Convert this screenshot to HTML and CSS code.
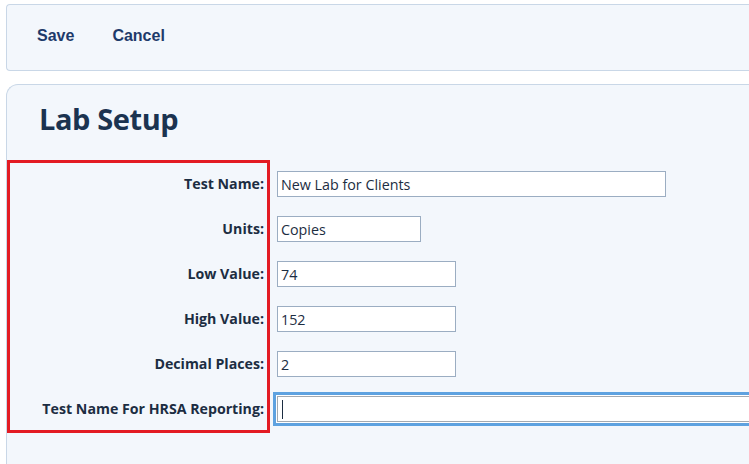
FILE: index.html
```html
<!DOCTYPE html>
<html>
<head>
<meta charset="utf-8">
<link rel="stylesheet" href="styles.css">
</head>
<body>
<div class="toolbar">
  <a class="tool-btn">Save</a>
  <a class="tool-btn">Cancel</a>
</div>
<div class="card">
  <h1 class="title">Lab Setup</h1>
  <div class="form">
    <div class="highlight"></div>
    <label class="lbl">Test Name:</label>
    <div class="field"><input class="inp w-long" type="text" value="New Lab for Clients"></div>
    <label class="lbl">Units:</label>
    <div class="field"><input class="inp w-short" type="text" value="Copies"></div>
    <label class="lbl">Low Value:</label>
    <div class="field"><input class="inp w-mid" type="text" value="74"></div>
    <label class="lbl">High Value:</label>
    <div class="field"><input class="inp w-mid" type="text" value="152"></div>
    <label class="lbl">Decimal Places:</label>
    <div class="field"><input class="inp w-mid" type="text" value="2"></div>
    <label class="lbl">Test Name For HRSA Reporting:</label>
    <div class="field focus-wrap"><input class="inp w-full focused" type="text" value=""><span class="caret"></span></div>
  </div>
</div>
</body>
</html>
```
FILE: styles.css
```css
html, body {
  margin: 0;
  padding: 0;
  background: #ffffff;
  overflow: hidden;
}
body {
  padding: 4px 0 0 6px;
  height: 464px;
  box-sizing: border-box;
}
.toolbar {
  box-sizing: border-box;
  height: 67px;
  width: 743px;
  background: #f3f7fc;
  border: 1px solid #c9d7e7;
  border-right: none;
  border-radius: 4px 0 0 4px;
  display: flex;
  align-items: center;
  padding-left: 30px;
  gap: 38px;
}
.tool-btn {
  font-family: "Liberation Sans", Arial, sans-serif;
  font-weight: bold;
  font-size: 16px;
  color: #1e3a6a;
  margin-top: -3px;
}
.card {
  margin-top: 13px;
  width: 743px;
  height: 380px;
  box-sizing: border-box;
  background: #f3f7fc;
  border: 1px solid #c9d7e7;
  border-right: none;
  border-bottom: none;
  border-radius: 12px 0 0 0;
  overflow: hidden;
}
.title {
  margin: 0;
  padding: 14px 0 0 32px;
  font-family: "Open Sans", sans-serif;
  font-weight: 700;
  font-size: 29px;
  letter-spacing: -0.4px;
  line-height: 40px;
  color: #1b3350;
}
.form {
  position: relative;
  margin-top: 32px;
  display: grid;
  grid-template-columns: 257px 1fr;
  column-gap: 13px;
  row-gap: 19px;
  grid-auto-rows: 26px;
}
.highlight {
  position: absolute;
  left: 0;
  top: -11px;
  width: 263px;
  height: 273px;
  box-sizing: border-box;
  border: 3px solid #e31b23;
  pointer-events: none;
}
.lbl {
  font-family: "Open Sans", sans-serif;
  font-weight: 700;
  font-size: 14.2px;
  color: #1c2d42;
  text-align: right;
  align-self: center;
  line-height: 20px;
}
.field {
  display: flex;
  align-items: center;
  min-width: 0;
}
.inp {
  box-sizing: border-box;
  height: 26px;
  border: 1px solid #9badc2;
  border-radius: 0;
  background: #ffffff;
  font-family: "Open Sans", sans-serif;
  font-size: 14.3px;
  color: #1c2d42;
  padding: 0 3px;
  margin: 0;
  outline: none;
  flex: none;
}
.w-long { width: 389px; }
.w-short { width: 144px; }
.w-mid { width: 179px; }
.w-full { width: 500px; }
.focus-wrap {
  position: relative;
}
.focused {
  border-color: #a3a9b0;
  box-shadow: 0 0 0 1px #ffffff, 0 0 0 4px #5ea2e0;
}
.caret {
  position: absolute;
  left: 5px;
  top: 4px;
  width: 1px;
  height: 19px;
  background: #1c2d42;
}
```
